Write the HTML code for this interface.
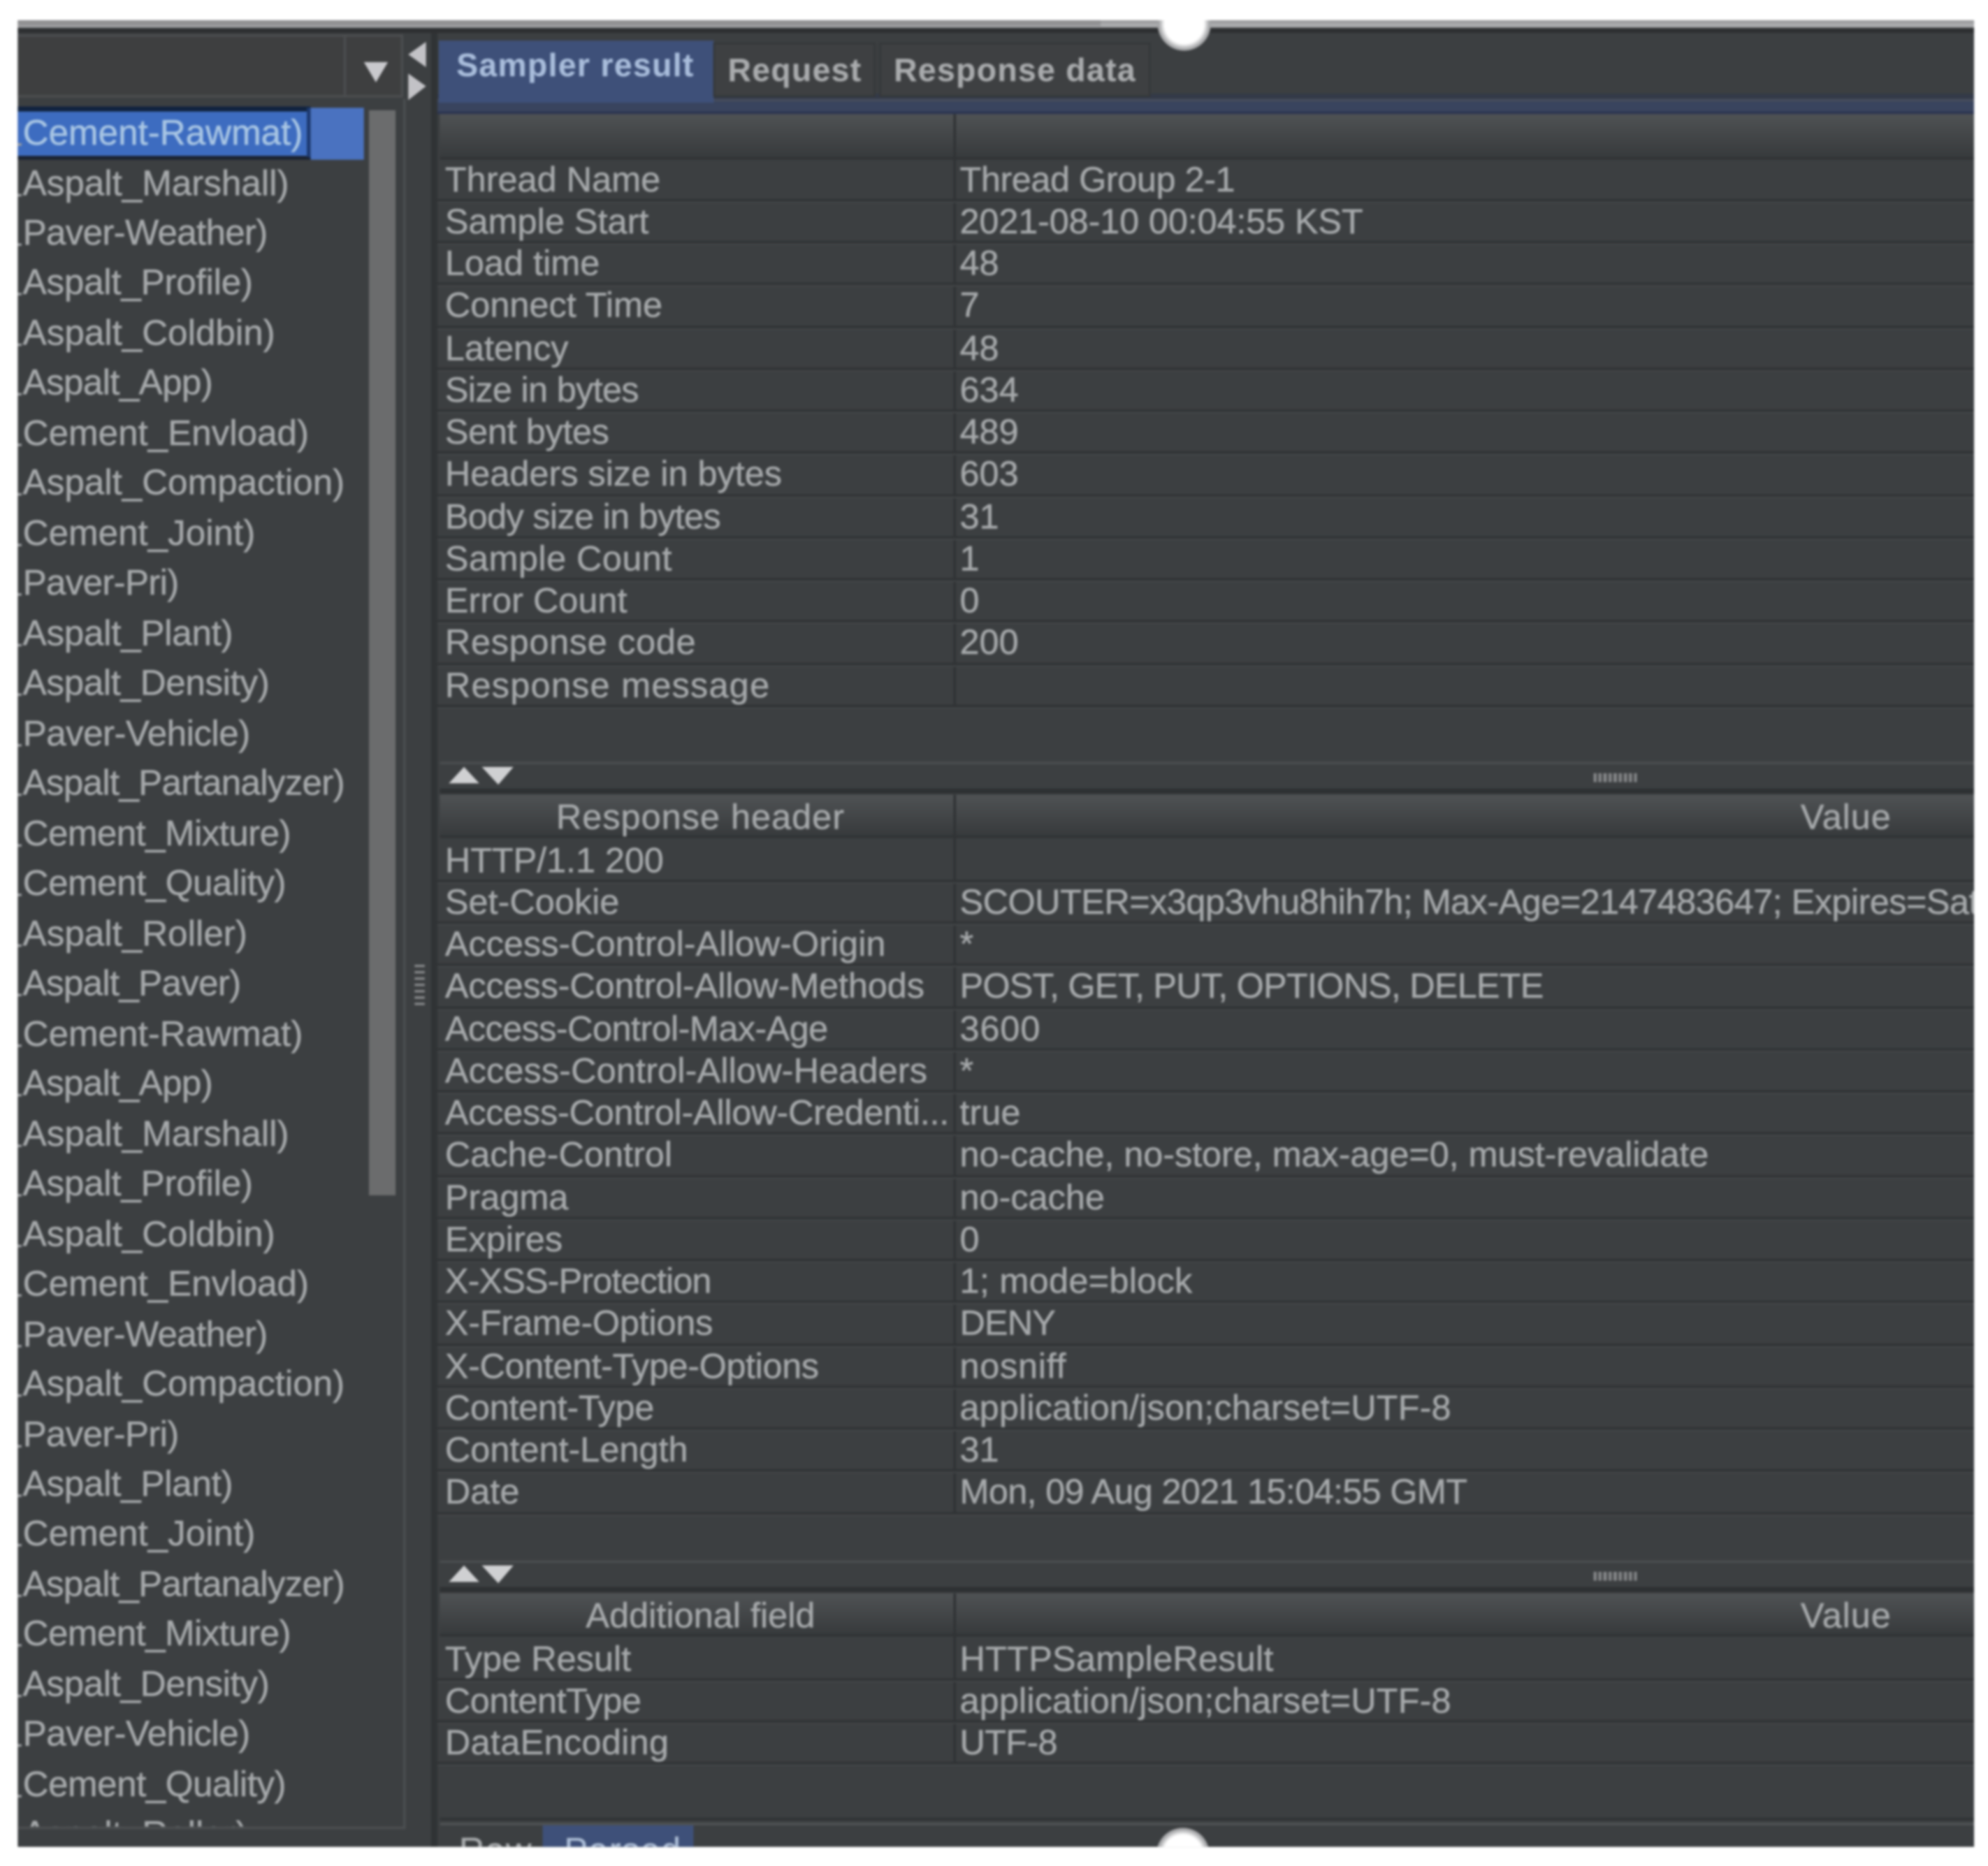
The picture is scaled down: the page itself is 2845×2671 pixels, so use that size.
<!DOCTYPE html>
<html>
<head>
<meta charset="utf-8">
<style>
html,body{margin:0;padding:0;width:2845px;height:2670px;background:#fff;overflow:hidden}
#s{position:absolute;left:0;top:0;width:1568px;height:1472px;transform:scale(1.81441);transform-origin:0 0;filter:blur(.9px);font-family:"Liberation Sans",sans-serif;font-size:27.8px;color:#a6a9ab;-webkit-text-stroke:.25px #a6a9ab}
#p{position:absolute;left:14px;top:16px;width:1543px;height:1441px;background:#3c3f41;overflow:hidden}
#q{position:absolute;left:-14px;top:-16px;width:1568px;height:1472px}
.a{position:absolute}
.l{position:absolute;left:18px;height:39px;line-height:40px;white-space:nowrap;font-size:28.2px}
.l:before{content:"";position:absolute;left:-4px;top:29px;width:3px;height:2px;background:#9a9da0}
.r{position:absolute;left:345px;width:1212px;height:33.25px;margin-top:1.5px;line-height:31.5px;box-shadow:inset 0 -2px 0 #303335,0 1px 0 #45484a;white-space:nowrap}
.k{position:absolute;left:6px;width:402px;overflow:hidden}
.v{position:absolute;left:412px}
.h{position:absolute;left:347px;width:1210px;height:34px;line-height:35px;background:linear-gradient(#4f5254,#36393b);box-shadow:inset 0 -2px 0 #303335}
.t{position:absolute;height:47px;line-height:42px;font-weight:bold;font-size:25.5px;letter-spacing:.75px;white-space:nowrap}
.c{position:absolute;width:42px;height:42px;border-radius:50%;background:radial-gradient(circle,#fff 0,#fff 52%,#a9aaac 66%,#8b8c8e 82%,rgba(90,92,94,0) 100%)}
</style>
</head>
<body>
<div id="s">
<div id="p"><div id="q">
  <!-- top bar -->
  <div class="a" style="left:0;top:16px;width:868px;height:6px;background:linear-gradient(#8a8a8c,#a0a0a2)"></div>
  <div class="a" style="left:868px;top:16px;width:700px;height:7px;background:linear-gradient(#949597,#b0b1b3 60%,#7a7b7d)"></div>
  <div class="a" style="left:0;top:22px;width:1568px;height:4px;background:#2e3032"></div>

  <!-- left combobox -->
  <div class="a" style="left:0;top:27px;width:318px;height:50px;border:2px solid #4b4d4f;border-left:0;box-sizing:border-box;background:#3e3f40"></div>
  <div class="a" style="left:271px;top:28px;width:2px;height:48px;background:#4b4d4f"></div>
  <svg class="a" style="left:280px;top:40px" width="60" height="45"><path d="M7 9H26L16.500 25Z" fill="#c9c9cd"/></svg>
  <svg class="a" style="left:318px;top:30px" width="24" height="54"><path d="M18 3V23L4 13Z" fill="#c2c2c6"/><path d="M4 28L18 38L4 49Z" fill="#c2c2c6"/></svg>

  <!-- list frame -->
  <div class="a" style="left:0;top:78px;width:320px;height:1365px;border-right:2px solid #4b4e50;border-bottom:2px solid #4b4e50;box-sizing:border-box"></div>
  <div class="a" style="left:0;top:84px;width:245px;height:4px;background:#11233f"></div>
  <div class="a" style="left:0;top:88px;width:243px;height:35px;background:#3d6cc0"></div>
  <div class="a" style="left:0;top:123px;width:245px;height:3px;background:#1a2230"></div>
  <div class="a" style="left:242px;top:85px;width:3px;height:39px;background:#1d3a70"></div>
  <div class="a" style="left:245px;top:85px;width:42px;height:41px;background:#4a72c0"></div>
  <div class="a" style="left:291px;top:87px;width:21px;height:856px;background:#6b6c6d"></div>

  <div id="list" class="a" style="left:0;top:0;width:318px;height:1441px;overflow:hidden">
  <div class="l" style="top:84px;color:#a9c6e4;-webkit-text-stroke:.25px #a9c6e4">Cement-Rawmat)</div>
  <div class="l" style="top:123.500px">Aspalt_Marshall)</div>
  <div class="l" style="top:163px;letter-spacing:-.4px">Paver-Weather)</div>
  <div class="l" style="top:202.400px;letter-spacing:-.13px">Aspalt_Profile)</div>
  <div class="l" style="top:241.900px">Aspalt_Coldbin)</div>
  <div class="l" style="top:281.400px;letter-spacing:-.36px">Aspalt_App)</div>
  <div class="l" style="top:320.900px">Cement_Envload)</div>
  <div class="l" style="top:360.400px">Aspalt_Compaction)</div>
  <div class="l" style="top:399.800px">Cement_Joint)</div>
  <div class="l" style="top:439.300px;letter-spacing:-.4px">Paver-Pri)</div>
  <div class="l" style="top:478.800px;letter-spacing:-.15px">Aspalt_Plant)</div>
  <div class="l" style="top:518.300px;letter-spacing:-.2px">Aspalt_Density)</div>
  <div class="l" style="top:557.800px;letter-spacing:-.3px">Paver-Vehicle)</div>
  <div class="l" style="top:597.200px;letter-spacing:-.4px">Aspalt_Partanalyzer)</div>
  <div class="l" style="top:636.700px;letter-spacing:-.33px">Cement_Mixture)</div>
  <div class="l" style="top:676.200px;letter-spacing:-.27px">Cement_Quality)</div>
  <div class="l" style="top:715.700px">Aspalt_Roller)</div>
  <div class="l" style="top:755.200px;letter-spacing:-.4px">Aspalt_Paver)</div>
  <div class="l" style="top:794.600px">Cement-Rawmat)</div>
  <div class="l" style="top:834.100px;letter-spacing:-.36px">Aspalt_App)</div>
  <div class="l" style="top:873.600px">Aspalt_Marshall)</div>
  <div class="l" style="top:913.100px;letter-spacing:-.13px">Aspalt_Profile)</div>
  <div class="l" style="top:952.600px">Aspalt_Coldbin)</div>
  <div class="l" style="top:992px">Cement_Envload)</div>
  <div class="l" style="top:1031.500px;letter-spacing:-.4px">Paver-Weather)</div>
  <div class="l" style="top:1071px">Aspalt_Compaction)</div>
  <div class="l" style="top:1110.500px;letter-spacing:-.4px">Paver-Pri)</div>
  <div class="l" style="top:1150px;letter-spacing:-.15px">Aspalt_Plant)</div>
  <div class="l" style="top:1189.400px">Cement_Joint)</div>
  <div class="l" style="top:1228.900px;letter-spacing:-.4px">Aspalt_Partanalyzer)</div>
  <div class="l" style="top:1268.400px;letter-spacing:-.33px">Cement_Mixture)</div>
  <div class="l" style="top:1307.900px;letter-spacing:-.2px">Aspalt_Density)</div>
  <div class="l" style="top:1347.400px;letter-spacing:-.3px">Paver-Vehicle)</div>
  <div class="l" style="top:1386.800px;letter-spacing:-.27px">Cement_Quality)</div>
  </div>
  <div class="a" style="left:0;top:1436px;width:318px;height:5px;overflow:hidden"><div class="l" style="top:-10px">Aspalt_Roller)</div></div>

  <!-- vertical splitter -->
  <div class="a" style="left:340px;top:26px;width:5px;height:1431px;background:#303335"></div>
  <svg class="a" style="left:324px;top:760px" width="14" height="36"><path d="M3 2H11M3 7H11M3 12H11M3 17H11M3 22H11M3 27H11M3 32H11" stroke="#8a8c8e" stroke-width="1.800"/></svg>

  <!-- tabs -->
  <div class="a" style="left:345px;top:74px;width:1212px;height:4px;background:#333a48"></div>
  <div class="a" style="left:345px;top:78px;width:1212px;height:2px;background:#474d5c"></div>
  <div class="a" style="left:345px;top:80px;width:1212px;height:10px;background:#39445e;box-shadow:inset 0 -2px 0 #2b3450"></div>
  <div class="t" style="left:346px;top:32px;width:217px;height:49px;background:#3e5079;color:#a9bddb;-webkit-text-stroke:.1px #a9bddb;text-indent:14px;line-height:41px">Sampler result</div>
  <div class="t" style="left:564px;top:35px;width:125px;height:40px;background:#3e4042;box-shadow:0 0 0 1.500px #35383a;text-indent:10px;line-height:42px;color:#a9abad;-webkit-text-stroke:.1px #a9abad">Request</div>
  <div class="t" style="left:695px;top:35px;width:211px;height:40px;background:#3e4042;box-shadow:0 0 0 1.500px #35383a;text-indent:10px;line-height:42px;color:#a9abad;-webkit-text-stroke:.1px #a9abad">Response data</div>

  <!-- table 1 -->
  <div class="h" style="top:90px;height:36px"></div>
  <div class="a" style="left:752px;top:90px;width:2px;height:468px;background:#303335"></div>
  <div class="r" style="top:124px"><span class="k">Thread Name</span><span class="v" style="letter-spacing:-.25px">Thread Group 2-1</span></div>
  <div class="r" style="top:157.250px"><span class="k">Sample Start</span><span class="v" style="letter-spacing:-.08px">2021-08-10 00:04:55 KST</span></div>
  <div class="r" style="top:190.500px"><span class="k">Load time</span><span class="v">48</span></div>
  <div class="r" style="top:223.750px"><span class="k">Connect Time</span><span class="v">7</span></div>
  <div class="r" style="top:257px"><span class="k">Latency</span><span class="v">48</span></div>
  <div class="r" style="top:290.250px"><span class="k" style="letter-spacing:-.38px">Size in bytes</span><span class="v">634</span></div>
  <div class="r" style="top:323.500px"><span class="k" style="letter-spacing:-.2px">Sent bytes</span><span class="v">489</span></div>
  <div class="r" style="top:356.750px"><span class="k">Headers size in bytes</span><span class="v">603</span></div>
  <div class="r" style="top:390px"><span class="k" style="letter-spacing:-.38px">Body size in bytes</span><span class="v">31</span></div>
  <div class="r" style="top:423.250px"><span class="k" style="letter-spacing:.25px">Sample Count</span><span class="v">1</span></div>
  <div class="r" style="top:456.500px"><span class="k">Error Count</span><span class="v">0</span></div>
  <div class="r" style="top:489.750px"><span class="k" style="letter-spacing:.38px">Response code</span><span class="v">200</span></div>
  <div class="r" style="top:523px"><span class="k" style="letter-spacing:.68px">Response message</span><span class="v"></span></div>

  <!-- splitter 1 -->
  <div class="a" style="left:347px;top:601px;width:1210px;height:2px;background:#4a4d4f"></div>
  <div class="a" style="left:347px;top:622px;width:1210px;height:4px;background:#2e3133"></div>
  <svg class="a" style="left:350px;top:602px" width="60" height="20"><path d="M4 16L16 3L28 16Z" fill="#cfd0d2"/><path d="M30 3H55L43 17Z" fill="#cfd0d2"/></svg>
  <div class="a" style="left:1257px;top:610px;width:34px;height:7px;background:repeating-linear-gradient(90deg,#8a8c8e 0 2px,#4a4c4e 2px 4px)"></div>

  <!-- table 2 -->
  <div class="h" style="top:627px"><span class="a" style="left:0;width:411px;text-align:center;letter-spacing:.55px">Response header</span><span class="a" style="left:1039px;width:140px;text-align:center;letter-spacing:.5px">Value</span></div>
  <div class="a" style="left:752px;top:627px;width:2px;height:568px;background:#303335"></div>
  <div class="r" style="top:661px"><span class="k" style="letter-spacing:-.05px">HTTP/1.1 200</span><span class="v"></span></div>
  <div class="r" style="top:694.250px"><span class="k">Set-Cookie</span><span class="v" style="letter-spacing:-.3px">SCOUTER=x3qp3vhu8hih7h; Max-Age=2147483647; Expires=Sat, 01 Jan</span></div>
  <div class="r" style="top:727.500px"><span class="k">Access-Control-Allow-Origin</span><span class="v">*</span></div>
  <div class="r" style="top:760.750px"><span class="k" style="letter-spacing:-.07px">Access-Control-Allow-Methods</span><span class="v" style="letter-spacing:-.45px">POST, GET, PUT, OPTIONS, DELETE</span></div>
  <div class="r" style="top:794px"><span class="k" style="letter-spacing:-.32px">Access-Control-Max-Age</span><span class="v" style="letter-spacing:.5px">3600</span></div>
  <div class="r" style="top:827.250px"><span class="k" style="letter-spacing:.07px">Access-Control-Allow-Headers</span><span class="v">*</span></div>
  <div class="r" style="top:860.500px"><span class="k" style="letter-spacing:-.13px">Access-Control-Allow-Credenti...</span><span class="v">true</span></div>
  <div class="r" style="top:893.750px"><span class="k">Cache-Control</span><span class="v" style="letter-spacing:-.04px">no-cache, no-store, max-age=0, must-revalidate</span></div>
  <div class="r" style="top:927px"><span class="k">Pragma</span><span class="v">no-cache</span></div>
  <div class="r" style="top:960.250px"><span class="k">Expires</span><span class="v">0</span></div>
  <div class="r" style="top:993.500px"><span class="k" style="letter-spacing:-.5px">X-XSS-Protection</span><span class="v" style="letter-spacing:.15px">1; mode=block</span></div>
  <div class="r" style="top:1026.750px"><span class="k" style="letter-spacing:-.13px">X-Frame-Options</span><span class="v" style="letter-spacing:-.5px">DENY</span></div>
  <div class="r" style="top:1060px"><span class="k" style="letter-spacing:-.23px">X-Content-Type-Options</span><span class="v" style="letter-spacing:.4px">nosniff</span></div>
  <div class="r" style="top:1093.250px"><span class="k" style="letter-spacing:-.17px">Content-Type</span><span class="v" style="letter-spacing:.07px">application/json;charset=UTF-8</span></div>
  <div class="r" style="top:1126.500px"><span class="k">Content-Length</span><span class="v">31</span></div>
  <div class="r" style="top:1159.750px"><span class="k">Date</span><span class="v" style="letter-spacing:-.38px">Mon, 09 Aug 2021 15:04:55 GMT</span></div>

  <!-- splitter 2 -->
  <div class="a" style="left:347px;top:1231px;width:1210px;height:2px;background:#4a4d4f"></div>
  <div class="a" style="left:347px;top:1252px;width:1210px;height:4px;background:#2e3133"></div>
  <svg class="a" style="left:350px;top:1232px" width="60" height="20"><path d="M4 16L16 3L28 16Z" fill="#cfd0d2"/><path d="M30 3H55L43 17Z" fill="#cfd0d2"/></svg>
  <div class="a" style="left:1257px;top:1240px;width:34px;height:7px;background:repeating-linear-gradient(90deg,#8a8c8e 0 2px,#4a4c4e 2px 4px)"></div>

  <!-- table 3 -->
  <div class="h" style="top:1257px"><span class="a" style="left:0;width:411px;text-align:center">Additional field</span><span class="a" style="left:1039px;width:140px;text-align:center;letter-spacing:.5px">Value</span></div>
  <div class="a" style="left:752px;top:1257px;width:2px;height:135px;background:#303335"></div>
  <div class="r" style="top:1291px"><span class="k">Type Result</span><span class="v" style="letter-spacing:.12px">HTTPSampleResult</span></div>
  <div class="r" style="top:1324.250px"><span class="k" style="letter-spacing:-.27px">ContentType</span><span class="v" style="letter-spacing:.07px">application/json;charset=UTF-8</span></div>
  <div class="r" style="top:1357.500px"><span class="k" style="letter-spacing:.17px">DataEncoding</span><span class="v" style="letter-spacing:-.4px">UTF-8</span></div>

  <!-- bottom -->
  <div class="a" style="left:347px;top:1434px;width:1210px;height:2px;background:#303335"></div>
  <div class="a" style="left:347px;top:1438px;width:1210px;height:2px;background:#4f5254"></div>
  <div class="a" style="left:428px;top:1440px;width:119px;height:18px;background:#3e5079"></div>
  <div class="t" style="left:362px;top:1440px;height:40px;font-weight:normal;line-height:40px;font-size:27.800px">Raw</div>
  <div class="t" style="left:445px;top:1440px;height:40px;font-weight:normal;line-height:40px;font-size:27.800px;color:#a9bddb">Parsed</div>

  <!-- circles -->
  <div class="c" style="left:913px;top:-2.500px"></div>
  <div class="c" style="left:912px;top:1442px"></div>
</div></div>
</div>
</body>
</html>
